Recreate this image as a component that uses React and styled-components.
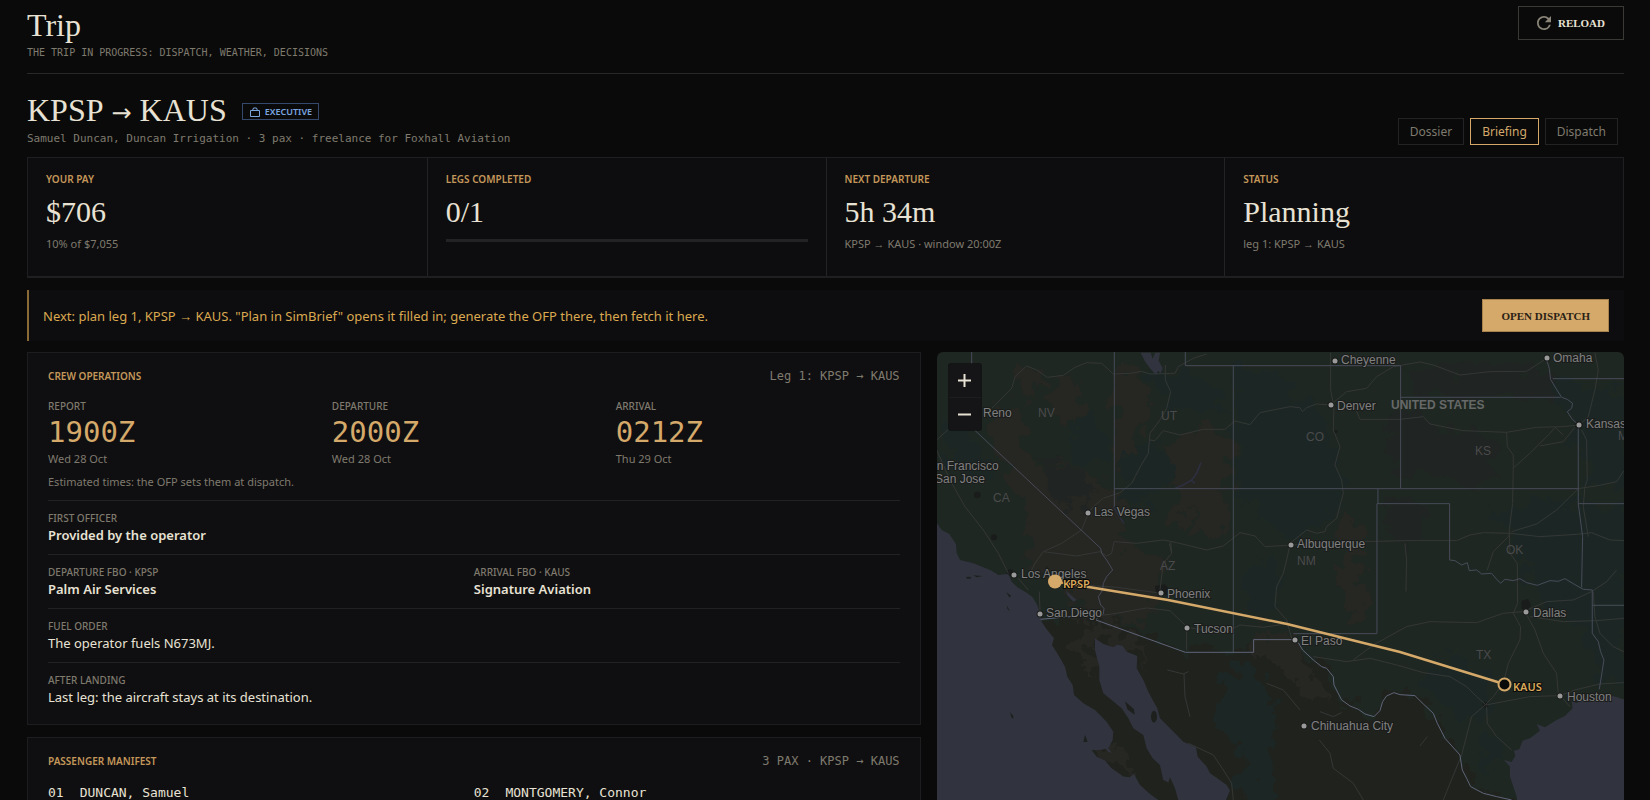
import React from 'react';
import styled, { createGlobalStyle } from 'styled-components';

const sans = `'Noto Sans', 'Open Sans', sans-serif`;
const serif = `'Liberation Serif', serif`;
const mono = `'DejaVu Sans Mono', 'Liberation Mono', monospace`;

const GlobalStyle = createGlobalStyle`
  * {
    box-sizing: border-box;
  }

  html {
    scrollbar-width: none;
  }

  body {
    margin: 0;
    background-color: #0a0a0a;
    color: #e8e2d4;
    font-family: ${sans};
    font-size: 13px;
  }
`;

const Page = styled.main`
  padding: 6px 26px 24px 27px;
`;

const PageHeader = styled.header`
  display: flex;
  justify-content: space-between;
  align-items: flex-start;
  height: 68px;
  border-bottom: 1px solid #29292b;
`;

const Title = styled.h1`
  margin: 0;
  font-family: ${serif};
  font-size: 32px;
  font-weight: 400;
  line-height: 39px;
`;

const Subtitle = styled.p`
  margin: 0;
  color: #7f7a6e;
  font-family: ${mono};
  font-size: ${({ $size }) => $size || 11}px;
  line-height: 16px;
  text-transform: ${({ $upper }) => ($upper ? 'uppercase' : 'none')};
`;

const SerifButton = styled.button`
  display: flex;
  align-items: center;
  gap: 7px;
  height: ${({ $solid }) => ($solid ? 33 : 34)}px;
  padding: 0 18px;
  border: 1px solid ${({ $solid }) => ($solid ? '#a8834d' : '#3a3935')};
  background-color: ${({ $solid }) => ($solid ? '#d4a96a' : 'transparent')};
  color: ${({ $solid }) => ($solid ? '#2a2115' : '#e8e2d4')};
  font-family: ${serif};
  font-size: 11px;
  font-weight: 700;
  text-transform: uppercase;
  cursor: pointer;
`;

const TripHeader = styled.div`
  display: flex;
  justify-content: space-between;
  align-items: flex-end;
  height: 83px;
  padding-bottom: 10px;
`;

const TitleRow = styled.div`
  display: flex;
  align-items: center;
  gap: 15px;
`;

const Route = styled.h2`
  margin: 0;
  font-family: ${serif};
  font-size: 32px;
  font-weight: 400;
  line-height: 36px;
`;

const RouteArrow = styled.span`
  margin: 0 8px;
  font-family: 'DejaVu Sans', sans-serif;
  font-size: 24px;
`;

const Badge = styled.span`
  display: flex;
  align-items: center;
  gap: 4px;
  height: 17px;
  padding: 0 6px;
  border: 1px solid #34496c;
  color: #7ba6e0;
  font-size: 9px;
  font-weight: 600;
  text-transform: uppercase;
`;

const Tabs = styled.nav`
  display: flex;
  gap: 6px;
  padding: 0 6px 2px 0;
`;

const Tab = styled.button`
  height: 27px;
  padding: 0 11px;
  border: 1px solid ${({ $active }) => ($active ? '#d4a96a' : '#232325')};
  background-color: transparent;
  color: ${({ $active }) => ($active ? '#d4a96a' : '#7f7a6e')};
  font-family: ${sans};
  font-size: 12px;
  cursor: pointer;
`;

const Stats = styled.section`
  display: grid;
  grid-template-columns: repeat(4, 1fr);
  height: 121px;
  border: 1px solid #1f1f22;
  border-bottom: 2px solid #1f1f22;
  background-color: #0d0d0f;
`;

const Stat = styled.div`
  padding: 13px 18px;

  & + & {
    border-left: 1px solid #232326;
  }
`;

const Heading = styled.h3`
  margin: 0;
  color: #c4975a;
  font-family: ${sans};
  font-size: 10px;
  font-weight: 600;
  line-height: 16px;
  text-transform: uppercase;
`;

const StatValue = styled.div`
  margin-top: 6px;
  font-family: ${serif};
  font-size: 30px;
  line-height: 38px;
`;

const Note = styled.div`
  margin-top: ${({ $top }) => $top || 0}px;
  color: #7f7a6e;
  font-size: 11px;
  line-height: 18px;
`;

const Progress = styled.div`
  height: 3px;
  margin-top: 8px;
  background-color: #232326;
`;

const Notice = styled.section`
  display: flex;
  align-items: center;
  justify-content: space-between;
  height: 51px;
  margin: 12px 0 11px;
  padding: 0 15px 0 14px;
  border-left: 2px solid #8a6a35;
  background-color: #0d0d0f;
  color: #dba94f;
  font-size: 13px;
`;

const Columns = styled.div`
  display: grid;
  grid-template-columns: 13fr 10fr;
  gap: 16px;
`;

const Stack = styled.div`
  display: flex;
  flex-direction: column;
  gap: 12px;
`;

const Panel = styled.section`
  padding: 15px 20px 8px;
  border: 1px solid #1d1d20;
  background-color: #0f0f11;
`;

const PanelHeader = styled.header`
  display: flex;
  justify-content: space-between;
  align-items: center;
  margin-bottom: 14px;
`;

const PanelMeta = styled.span`
  color: #7f7a6e;
  font-family: ${mono};
  font-size: 12px;
  line-height: 16px;
`;

const Row = styled.div`
  display: grid;
  grid-template-columns: repeat(${({ $cols }) => $cols || 1}, 1fr);
  padding: ${({ $divided }) => ($divided ? '9px 0' : '0')};
  border-top: ${({ $divided }) => ($divided ? '1px solid #222225' : 'none')};
`;

const Label = styled.div`
  color: #7f7a6e;
  font-size: 10px;
  font-weight: 500;
  line-height: 16px;
  text-transform: uppercase;
`;

const Time = styled.div`
  color: #d4a96a;
  font-family: ${mono};
  font-size: 29px;
  line-height: 36px;
`;

const Value = styled.div`
  font-size: 13px;
  font-weight: ${({ $strong }) => ($strong ? 600 : 400)};
  line-height: 19px;
`;

const Estimate = styled(Note)`
  margin: 5px 0 9px;
`;

const Passenger = styled.div`
  display: flex;
  gap: 16px;
  padding-bottom: 28px;
  font-family: ${mono};
  font-size: 13px;
  line-height: 19px;
`;

const MapFrame = styled.section`
  position: relative;
  overflow: hidden;
  border-radius: 6px;
  background-color: #1f2722;
`;

const MapCanvas = styled.svg`
  display: block;
  width: 100%;
  height: 100%;
`;

const ZoomControls = styled.div`
  position: absolute;
  top: 12px;
  left: 12px;
  display: flex;
  flex-direction: column;
  width: 32px;
  border-radius: 2px;
  background-color: #151517;
  box-shadow: 0 0 0 1px rgba(10, 10, 12, 0.6);
`;

const ZoomButton = styled.button`
  display: flex;
  align-items: center;
  justify-content: center;
  height: 33px;
  padding: 0;
  border: 0;
  background-color: transparent;
  color: #e8e2d4;
  cursor: pointer;

  & + & {
    border-top: 1px solid #1d1d20;
  }
`;

const stats = [
  { label: 'Your pay', value: '$706', note: '10% of $7,055' },
  { label: 'Legs completed', value: '0/1' },
  { label: 'Next departure', value: '5h 34m', note: 'KPSP → KAUS · window 20:00Z' },
  { label: 'Status', value: 'Planning', note: 'leg 1: KPSP → KAUS' },
];

const times = [
  { label: 'Report', time: '1900Z', date: 'Wed 28 Oct' },
  { label: 'Departure', time: '2000Z', date: 'Wed 28 Oct' },
  { label: 'Arrival', time: '0212Z', date: 'Thu 29 Oct' },
];

const details = [
  [{ label: 'First officer', value: 'Provided by the operator', strong: true }],
  [
    { label: 'Departure FBO · KPSP', value: 'Palm Air Services', strong: true },
    { label: 'Arrival FBO · KAUS', value: 'Signature Aviation', strong: true },
  ],
  [{ label: 'Fuel order', value: 'The operator fuels N673MJ.' }],
  [{ label: 'After landing', value: 'Last leg: the aircraft stays at its destination.' }],
];

const passengers = [
  { seat: '01', name: 'DUNCAN, Samuel' },
  { seat: '02', name: 'MONTGOMERY, Connor' },
];

// name, label x, label baseline, dot x, dot y
const cities = [
  ['Reno', 46, 65],
  ['San Francisco', -15, 118],
  ['San Jose', -2, 131],
  ['Las Vegas', 157, 164, 151, 161],
  ['Cheyenne', 404, 12, 398, 9],
  ['Omaha', 616, 10, 610, 6],
  ['Denver', 400, 58, 394, 53],
  ['Kansas City', 649, 76, 642, 73],
  ['Albuquerque', 360, 196, 354, 193],
  ['Los Angeles', 84, 226, 77, 223],
  ['San Diego', 109, 265, 103, 262],
  ['Phoenix', 230, 246, 224, 241],
  ['Tucson', 257, 281, 250, 276],
  ['El Paso', 364, 293, 358, 288],
  ['Chihuahua City', 374, 378, 367, 374],
  ['Dallas', 596, 265, 589, 260],
  ['Houston', 630, 349, 623, 344],
];

const states = [
  ['NV', 101, 65],
  ['UT', 224, 68],
  ['CA', 56, 150],
  ['AZ', 223, 218],
  ['CO', 369, 89],
  ['KS', 538, 103],
  ['NM', 360, 213],
  ['OK', 569, 202],
  ['TX', 539, 307],
  ['MO', 681, 88],
];

const Terrain = () => (
  <g filter="url(#rough)">
    <path
      fill="#20221d"
      d="M330 838 L485 826 L766 937 H971 V899 H1085 L1150 960 L1210 1010 L1235 1085 L1330 1130 L1365 1075 L1392 1060 L1455 1067 L1510 1120 L1590 1245 L1622 1340 L1760 1378 V1500 H300 Z"
    />
    <g fill="#262622">
      <path d="M170 270 L200 190 L270 230 L280 320 L340 390 L400 360 L480 400 L540 440 L600 470 L570 560 L600 620 L700 640 L690 740 L640 860 L560 850 L470 840 L420 740 L340 700 L280 660 L320 600 L260 500 L230 400 Z" />
      <path d="M556 90 L620 100 L660 150 L650 240 L610 330 L570 400 L556 330 Z" />
      <path d="M720 300 L800 270 L905 260 L905 420 L850 450 L800 490 L760 560 L720 540 L740 440 L690 380 Z" />
      <path d="M380 130 L450 110 L450 220 L400 280 L360 200 Z" />
      <path d="M250 90 L310 60 L340 130 L290 200 Z" />
      <path d="M800 450 L880 450 L900 540 L860 600 L790 570 Z" />
      <path d="M980 850 L1100 880 L1140 980 L1190 1090 L1130 1060 L1060 980 L990 940 Z" />
      <path d="M1240 520 L1300 560 L1290 660 L1320 780 L1260 860 L1220 700 Z" />
      <path d="M440 850 L560 860 L640 920 L660 1010 L620 930 L540 910 L480 890 L500 1010 L460 970 Z" />
      <path d="M520 1220 L600 1260 L620 1310 L560 1290 L500 1240 Z" />
    </g>
    <g fill="#1c2725">
      <path d="M30 290 L70 200 L110 260 L150 340 L170 420 L120 420 L60 370 Z" />
      <path d="M920 90 L1040 90 L1080 170 L1180 200 L1200 330 L1240 450 L1180 560 L1100 600 L1000 540 L920 440 Z" />
      <path d="M440 240 L470 200 L490 260 L540 300 L530 400 L480 360 L430 370 Z" />
      <path d="M600 320 L700 310 L720 420 L640 500 L580 480 Z" />
      <path d="M640 90 L760 100 L860 130 L880 210 L760 230 L700 180 Z" />
      <path d="M960 650 L1040 680 L1050 800 L970 830 L930 740 Z" />
      <path d="M890 1010 L960 960 L1010 1030 L1040 1180 L1010 1300 L1050 1450 L920 1450 L940 1250 L860 1150 Z" />
      <path d="M1480 980 L1580 950 L1660 990 L1690 1100 L1640 1160 L1560 1110 L1500 1060 Z" />
      <path d="M1700 520 L1820 480 L1990 500 L2100 500 V1060 L2000 1000 L1960 860 L1840 800 L1790 680 Z" />
      <path d="M1860 130 L2100 150 V460 L1980 420 L1940 300 Z" />
      <path d="M1640 1200 L1700 1180 L1720 1260 L1660 1290 Z" />
    </g>
    <g fill="#202422">
      <path d="M1370 240 L1440 210 L1560 260 L1690 300 L1710 420 L1600 440 L1480 400 L1390 420 Z" />
      <path d="M1420 90 L1700 70 L1860 100 L1880 165 L1560 180 L1440 150 Z" />
      <path d="M1360 460 L1460 480 L1500 560 L1440 620 L1370 590 Z" />
      <path d="M350 360 L440 380 L500 440 L470 500 L380 480 L330 420 Z" />
    </g>
  </g>
);

const UrbanAreas = () => (
  <g fill="#191c1a">
    <circle cx="142" cy="465" r="10" />
    <circle cx="192" cy="592" r="9" />
    <path d="M675 738 L705 733 L718 748 L712 764 L690 766 L678 755 Z" />
    <path d="M1775 782 L1795 777 L1803 795 L1792 812 L1775 806 Z" />
    <circle cx="1202" cy="195" r="10" />
    <circle cx="1218" cy="275" r="5" />
    <circle cx="1946" cy="255" r="12" />
    <circle cx="1666" cy="1095" r="9" />
    <circle cx="240" cy="698" r="10" />
  </g>
);

const Water = () => (
  <g fill="#31343f">
    <path d="M0 520 L20 548 L35 570 L58 582 L78 612 L80 640 L90 660 L130 670 L160 682 L185 692 L205 705 L235 702 L245 725 L262 742 L290 758 L308 772 L322 796 L330 820 L335 845 L350 868 L372 895 L366 915 L385 945 L405 980 L412 1010 L428 1035 L432 1065 L460 1090 L495 1110 L530 1145 L550 1175 L548 1200 L535 1225 L545 1238 L535 1236 L528 1226 L510 1230 L485 1230 L500 1250 L525 1262 L545 1285 L580 1310 L598 1312 L612 1303 L630 1335 L660 1362 L685 1380 L720 1460 L0 1500 Z" />
    <path d="M495 895 L520 912 L550 922 L562 914 L578 918 L590 935 L622 948 L620 985 L640 1020 L655 1055 L668 1080 L682 1105 L690 1135 L720 1165 L760 1205 L798 1222 L803 1250 L830 1280 L840 1300 L862 1315 L890 1335 L900 1352 L888 1380 L930 1480 L760 1480 L745 1380 L735 1345 L720 1312 L715 1328 L700 1320 L690 1275 L668 1255 L650 1225 L640 1185 L610 1165 L595 1135 L575 1105 L545 1080 L520 1060 L508 1020 L508 980 L495 930 Z" />
    <path d="M2100 1082 L2075 1076 L2050 1068 L2010 1072 L1975 1072 L1955 1078 L1940 1090 L1925 1082 L1928 1105 L1905 1128 L1880 1140 L1855 1156 L1845 1162 L1820 1152 L1830 1172 L1800 1195 L1778 1202 L1768 1228 L1752 1232 L1756 1248 L1745 1266 L1722 1260 L1740 1280 L1740 1310 L1750 1340 L1760 1370 L1775 1480 L2100 1480 Z" />
    <path d="M632 38 L662 38 L668 56 L676 38 L690 38 L686 62 L698 85 L692 100 L684 92 L678 105 L660 85 L645 64 Z" />
    <path d="M408 752 L440 780 L430 785 L412 765 Z" />
    <g fill="none" stroke="#2d2f40" strokeWidth="5">
      <path d="M735 445 L760 435 L785 420 L800 400 L813 368 M782 420 L795 430" />
      <path d="M550 500 L565 525 L582 550" strokeWidth="4" />
    </g>
    <g fill="#1d201d">
      <ellipse cx="116" cy="713" rx="8" ry="3" />
      <path d="M130 706 L158 708 L140 712 Z" />
      <path d="M228 756 L244 768 L238 772 Z" />
      <path d="M230 796 L240 814 L232 806 Z" />
      <path d="M240 1116 L250 1128 L250 1136 L244 1132 Z" />
      <path d="M465 1184 L473 1206 L460 1206 Z" />
      <path d="M585 1084 L612 1108 L614 1124 L592 1108 Z" />
      <ellipse cx="672" cy="1130" rx="9" ry="18" />
    </g>
  </g>
);

const Roads = () => (
  <g fill="none" stroke="#343735" strokeWidth="3" strokeLinejoin="round">
    <path d="M185 205 L215 175 L245 145 L255 110 L290 78 L320 90 L352 112 L400 106 L435 82 L470 68 L515 70 L550 102 L600 100 L635 94 L660 102 L735 100 L745 80 L790 55 L830 42" />
    <path d="M706 75 L706 120 L722 155 L710 205 L690 240 L660 280 L655 340 L632 378 L605 430 L570 458 L520 475 L490 500 L475 520 L455 570 L395 610 L340 635 L315 670 L300 700" />
    <path d="M658 300 L675 302 L700 272 L750 285 L820 268 L885 268 L915 243 L960 254 L990 218 L1080 200 L1110 203 L1118 215 L1130 203 L1160 192 L1200 195" />
    <path d="M20 300 L55 268 M20 330 L60 420 L105 500 L160 570 L205 640 L235 700" />
    <path d="M340 635 L440 648 L510 635 L530 648 L545 640 L552 605 L620 610 L700 600 L740 608 L830 630 L880 618 L930 578 L975 588 L1005 620 L1080 616" />
    <path d="M722 605 L725 640 L700 670 L690 750 M725 640 L718 610" />
    <path d="M1080 616 L1200 605 L1340 604 L1430 602 L1580 602 L1620 585 L1660 578 L1740 580 L1830 590 L1940 583 L1985 578 L2040 600 L2082 602" />
    <path d="M1080 610 L1130 570 L1160 580 L1185 575 L1190 560 L1220 535 L1240 460 L1235 420 L1215 375 L1230 320 L1210 270 L1212 200 L1202 150 L1202 38" />
    <path d="M1202 195 L1250 155 L1310 145 L1340 110 L1390 80 L1470 66 L1510 75 L1590 105 L1680 95 L1790 94 L1850 55" />
    <path d="M1270 190 L1290 238 L1410 238 L1480 230 L1500 252 L1600 272 L1730 277 L1820 262 L1900 260 L1945 255" />
    <path d="M1730 277 L1732 320 L1750 345 L1750 380 L1748 490 L1738 570 L1740 640 L1762 670 L1763 790 L1750 820 L1772 860 L1770 900 L1735 970 L1720 1030 L1690 1070 L1666 1095 L1625 1130 L1595 1245 L1540 1380" />
    <path d="M1750 384 L1800 340 L1860 280 L1875 262 L1900 285 M1830 318 L1900 305 L1935 262" />
    <path d="M1745 575 L1820 552 L1880 510 L1945 446 L2010 436 L2060 425 L2082 392" />
    <path d="M1955 270 L1970 300 L1972 420 L1965 440 L1960 500 L1975 590" />
    <path d="M1740 580 L1735 590 L1690 635 L1672 690 M1425 610 L1430 660 L1428 755" />
    <path d="M1270 960 L1330 915 L1430 860 L1500 845 L1640 848 L1720 820 L1780 815 L1850 785 L1930 780 L1985 755 L2030 725 L2060 690" />
    <path d="M1150 950 L1250 965 L1320 955 L1400 975 L1480 998 L1560 1010 L1610 1040 L1640 1070 L1668 1095 L1720 1085 L1800 1070 L1890 1067 L1935 1050 L2010 1032 L2082 1028" />
    <path d="M1670 1100 L1672 1150 L1700 1190 L1745 1230 M1788 820 L1815 870 L1840 940 L1880 1000 L1885 1060 L1920 1100" />
    <path d="M1990 755 L1995 830 L2010 880 L2050 920 L2082 935 M1800 830 L1900 845 L2000 842 L2082 835" />
    <path d="M500 828 L560 820 L650 804 L720 812 L770 860 L770 930 M455 735 L560 742 L680 758 M770 862 L880 880 L930 855 L1000 862 L1080 850" />
    <path d="M1080 616 L1070 660 L1060 700 L1040 740 L1035 800 L1070 840 L1085 895" />
    <path d="M712 990 L760 1002 L775 995 M762 1002 L765 1070 L780 1130 M1010 1030 L1060 1050 L1110 1110 M775 1210 L850 1245 L880 1290 L905 1330 L910 1380" />
    <path d="M1168 1200 L1200 1240 L1210 1285 L1270 1330 L1300 1380 M1170 1115 L1210 1130 L1235 1118 M1492 1190 L1470 1218" />
    <path d="M1995 38 L2005 90 L1995 150 L1975 230 L1948 255 M328 755 L330 815 M265 715 L295 750" />
  </g>
);

const Borders = () => (
  <g fill="none" stroke="#474b58" strokeWidth="3" strokeLinejoin="round">
    <path d="M125 36 V76 L125 262 L512 625 L515 640 L530 660 L548 690 L530 710 L520 730 L518 750 L505 770 L512 795 L522 805 L520 822 L498 838" />
    <path d="M553 36 V500 M553 446 H1946 M910 77 V937 M766 36 V77 H1412 V446 M1412 172 H1892" />
    <path d="M1344 446 V491 M1341 880 V491 H1559 V660 L1575 662 L1595 675 L1612 668 L1618 692 L1640 690 L1655 702 L1685 700 L1700 718 L1712 730 L1725 718 L1750 722 L1770 716 L1790 728 L1822 736 L1860 722 L1885 724 L1905 716 L1935 734 L1960 748 L1987 750" />
    <path d="M1341 881 H1090 M1945 262 V491 L1958 590 L1955 742 M1945 491 H2090 M1987 796 H2090" />
    <path d="M1850 60 L1858 85 L1862 118 L1878 145 L1895 172 L1912 178 L1928 190 L1925 205 L1912 215 L1925 235 L1945 255 M1868 116 H2090" />
    <path d="M1987 750 V880 L2005 905 L2012 935 L2022 960 L2015 1005 L2008 1048" />
    <g stroke="#5f6579">
      <path d="M332 838 L440 828 M498 840 L766 937 H971 V899 H1085" />
      <path d="M1105 908 L1118 930 L1150 960 L1175 980 L1190 985 L1210 1010 L1212 1035 L1235 1080 L1260 1098 L1285 1108 L1305 1122 L1332 1130 L1350 1112 L1358 1085 L1370 1068 L1392 1058 L1410 1064 L1455 1067 L1480 1092 L1510 1120 L1522 1150 L1545 1195 L1590 1245 L1597 1290 L1610 1315 L1622 1340 L1660 1360 L1700 1370 L1745 1380" />
    </g>
  </g>
);

const RouteMap = () => (
  <MapCanvas role="img" aria-label="Route map">
    <defs>
      <filter id="rough" x="0" y="0" width="100%" height="100%" colorInterpolationFilters="sRGB">
        <feTurbulence type="fractalNoise" baseFrequency="0.02" numOctaves="4" seed="4" />
        <feDisplacementMap in="SourceGraphic" scale="110" xChannelSelector="R" yChannelSelector="G" />
      </filter>
    </defs>
    <g transform="translate(-7 -12) scale(0.3333)">
      <Terrain />
      <UrbanAreas />
      <Roads />
      <Water />
      <Borders />
    </g>
    <g fontFamily="Liberation Sans, sans-serif" fontSize="12" fill="#808080">
      <g fill="#4a4a4c">
        {states.map(([name, x, y]) => (
          <text key={name} x={x} y={y}>{name}</text>
        ))}
      </g>
      <text x="454" y="57" fill="#666968" fontWeight="700">UNITED STATES</text>
      {cities.map(([name, x, y, dotX, dotY]) => (
        <g key={name} stroke="#1a1c1b" strokeWidth="2" paintOrder="stroke">
          <text x={x} y={y}>{name}</text>
          {dotX && <circle cx={dotX} cy={dotY} r="2.5" fill="#9a9a9a" />}
        </g>
      ))}
    </g>
    <path
      d="M118 229.5 L231 248 L350 272 L463 300 L567 332"
      fill="none"
      stroke="#d4a96a"
      strokeWidth="2.5"
      strokeLinejoin="round"
    />
    <circle cx="118" cy="229.5" r="7" fill="#d4a96a" />
    <circle cx="567.5" cy="332.5" r="6" fill="#0a0a0a" stroke="#d4a96a" strokeWidth="2" />
    <g
      fontFamily="Noto Sans, sans-serif"
      fontSize="11"
      fontWeight="600"
      fill="#dba95c"
      stroke="#0a0a0a"
      strokeWidth="2"
      paintOrder="stroke"
    >
      <text x="126" y="236">KPSP</text>
      <text x="576" y="339">KAUS</text>
    </g>
  </MapCanvas>
);

const ReloadIcon = () => (
  <svg width="14" height="14" viewBox="4 4 16 16" fill="#8a8578" aria-hidden="true">
    <path d="M17.65 6.35A7.958 7.958 0 0 0 12 4c-4.420 0-7.990 3.580-7.990 8s3.570 8 7.990 8c3.730 0 6.840-2.550 7.730-6h-2.080A5.990 5.990 0 0 1 12 18c-3.310 0-6-2.690-6-6s2.690-6 6-6c1.660 0 3.140.69 4.220 1.780L13 11h7V4l-2.350 2.350z" />
  </svg>
);

const CaseIcon = () => (
  <svg width="12" height="12" viewBox="0 0 12 12" fill="none" stroke="currentColor" aria-hidden="true">
    <path d="M1.500 4.500 H10.500 V10.500 H1.500 Z M3.500 4.500 L4.500 2 H7.500 L8.500 4.500" />
  </svg>
);

const App = () => {
  return (
    <Page>
      <GlobalStyle />
      <PageHeader>
        <div>
          <Title>Trip</Title>
          <Subtitle $size={10} $upper>The trip in progress: dispatch, weather, decisions</Subtitle>
        </div>
        <SerifButton type="button">
          <ReloadIcon />
          Reload
        </SerifButton>
      </PageHeader>

      <TripHeader>
        <div>
          <TitleRow>
            <Route>
              KPSP<RouteArrow>→</RouteArrow>KAUS
            </Route>
            <Badge>
              <CaseIcon />
              Executive
            </Badge>
          </TitleRow>
          <Subtitle>Samuel Duncan, Duncan Irrigation · 3 pax · freelance for Foxhall Aviation</Subtitle>
        </div>
        <Tabs>
          <Tab type="button">Dossier</Tab>
          <Tab type="button" $active>Briefing</Tab>
          <Tab type="button">Dispatch</Tab>
        </Tabs>
      </TripHeader>

      <Stats>
        {stats.map(({ label, value, note }) => (
          <Stat key={label}>
            <Heading>{label}</Heading>
            <StatValue>{value}</StatValue>
            {note ? <Note $top={4}>{note}</Note> : <Progress role="progressbar" aria-label={label} aria-valuenow={0} />}
          </Stat>
        ))}
      </Stats>

      <Notice>
        <span>Next: plan leg 1, KPSP → KAUS. "Plan in SimBrief" opens it filled in; generate the OFP there, then fetch it here.</span>
        <SerifButton type="button" $solid>Open dispatch</SerifButton>
      </Notice>

      <Columns>
        <Stack>
          <Panel>
            <PanelHeader>
              <Heading>Crew operations</Heading>
              <PanelMeta>Leg 1: KPSP → KAUS</PanelMeta>
            </PanelHeader>
            <Row $cols={3}>
              {times.map(({ label, time, date }) => (
                <div key={label}>
                  <Label>{label}</Label>
                  <Time>{time}</Time>
                  <Note>{date}</Note>
                </div>
              ))}
            </Row>
            <Estimate>Estimated times: the OFP sets them at dispatch.</Estimate>
            {details.map((cells) => (
              <Row key={cells[0].label} $cols={cells.length} $divided>
                {cells.map(({ label, value, strong }) => (
                  <div key={label}>
                    <Label>{label}</Label>
                    <Value $strong={strong}>{value}</Value>
                  </div>
                ))}
              </Row>
            ))}
          </Panel>

          <Panel>
            <PanelHeader>
              <Heading>Passenger manifest</Heading>
              <PanelMeta>3 PAX · KPSP → KAUS</PanelMeta>
            </PanelHeader>
            <Row $cols={2}>
              {passengers.map(({ seat, name }) => (
                <Passenger key={seat}>
                  <span>{seat}</span>
                  <span>{name}</span>
                </Passenger>
              ))}
            </Row>
          </Panel>
        </Stack>

        <MapFrame>
          <RouteMap />
          <ZoomControls>
            <ZoomButton type="button" aria-label="Zoom in">
              <svg width="13" height="13" viewBox="0 0 13 13" stroke="currentColor" strokeWidth="2">
                <path d="M6.500 0 V13 M0 6.500 H13" />
              </svg>
            </ZoomButton>
            <ZoomButton type="button" aria-label="Zoom out">
              <svg width="13" height="13" viewBox="0 0 13 13" stroke="currentColor" strokeWidth="2">
                <path d="M0 6.500 H13" />
              </svg>
            </ZoomButton>
          </ZoomControls>
        </MapFrame>
      </Columns>
    </Page>
  );
};

export default App;
